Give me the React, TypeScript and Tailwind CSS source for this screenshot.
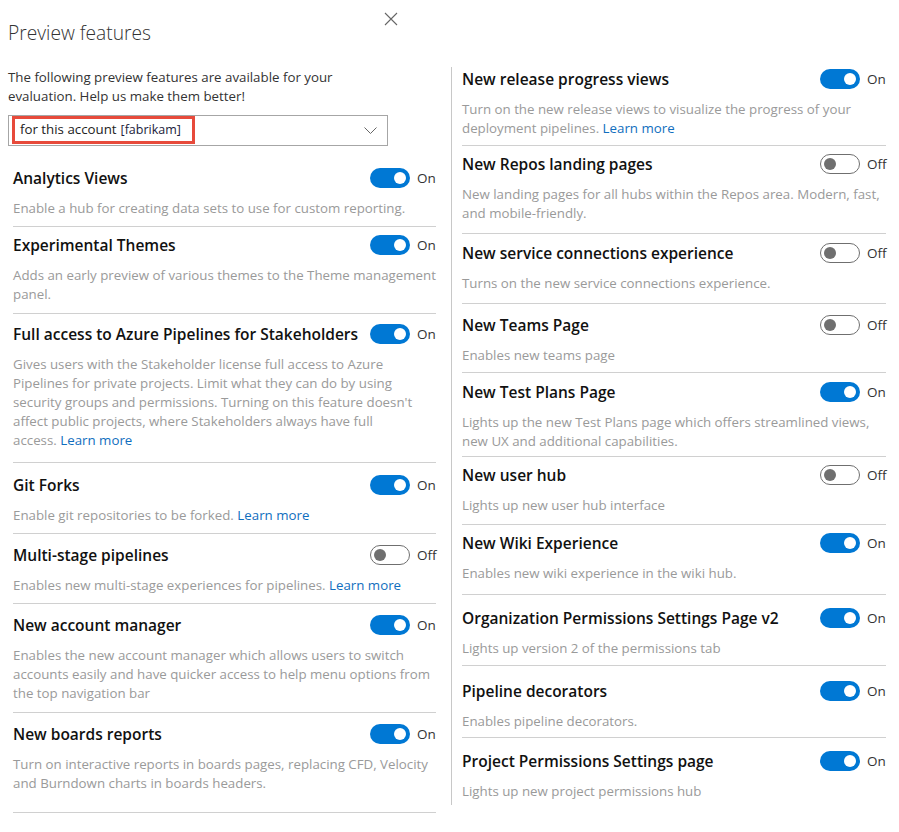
import React from 'react';

type Feature = {
  title: string;
  on: boolean;
  lines: string[];
  link?: boolean;
  pad: string;
  last?: boolean;
};

const leftFeatures: Feature[] = [
  { title: 'Analytics Views', on: true, pad: 'pt-0 pb-[8px]', lines: ['Enable a hub for creating data sets to use for custom reporting.'] },
  { title: 'Experimental Themes', on: true, pad: 'pt-[8px] pb-[9px]', lines: ['Adds an early preview of various themes to the Theme management', 'panel.'] },
  {
    title: 'Full access to Azure Pipelines for Stakeholders',
    on: true,
    pad: 'pt-[10px] pb-[12px]',
    link: true,
    lines: [
      'Gives users with the Stakeholder license full access to Azure',
      'Pipelines for private projects. Limit what they can do by using',
      "security groups and permissions. Turning on this feature doesn't",
      'affect public projects, where Stakeholders always have full',
      'access.',
    ],
  },
  { title: 'Git Forks', on: true, pad: 'pt-[12px] pb-[8px]', link: true, lines: ['Enable git repositories to be forked.'] },
  { title: 'Multi-stage pipelines', on: false, pad: 'pt-[11px] pb-[8px]', link: true, lines: ['Enables new multi-stage experiences for pipelines.'] },
  {
    title: 'New account manager',
    on: true,
    pad: 'pt-[11px] pb-[9px]',
    lines: [
      'Enables the new account manager which allows users to switch',
      'accounts easily and have quicker access to help menu options from',
      'the top navigation bar',
    ],
  },
  {
    title: 'New boards reports',
    on: true,
    pad: 'pt-[11px] pb-[19px]',
    lines: ['Turn on interactive reports in boards pages, replacing CFD, Velocity', 'and Burndown charts in boards headers.'],
  },
];

const rightFeatures: Feature[] = [
  {
    title: 'New release progress views',
    on: true,
    pad: 'pt-[2px] pb-[7px]',
    link: true,
    lines: ['Turn on the new release views to visualize the progress of your', 'deployment pipelines.'],
  },
  {
    title: 'New Repos landing pages',
    on: false,
    pad: 'pt-[8px] pb-[10px]',
    lines: ['New landing pages for all hubs within the Repos area. Modern, fast,', 'and mobile-friendly.'],
  },
  { title: 'New service connections experience', on: false, pad: 'pt-[9px] pb-[10px]', lines: ['Turns on the new service connections experience.'] },
  { title: 'New Teams Page', on: false, pad: 'pt-[11px] pb-[7px]', lines: ['Enables new teams page'] },
  {
    title: 'New Test Plans Page',
    on: true,
    pad: 'pt-[9px] pb-[5px]',
    lines: ['Lights up the new Test Plans page which offers streamlined views,', 'new UX and additional capabilities.'],
  },
  { title: 'New user hub', on: false, pad: 'pt-[8px] pb-[9px]', lines: ['Lights up new user hub interface'] },
  { title: 'New Wiki Experience', on: true, pad: 'pt-[8px] pb-[11px]', lines: ['Enables new wiki experience in the wiki hub.'] },
  { title: 'Organization Permissions Settings Page v2', on: true, pad: 'pt-[13px] pb-[7px]', lines: ['Lights up version 2 of the permissions tab'] },
  { title: 'Pipeline decorators', on: true, pad: 'pt-[15px] pb-[6px]', lines: ['Enables pipeline decorators.'] },
  { title: 'Project Permissions Settings page', on: true, pad: 'pt-[13px] pb-[4px]', last: true, lines: ['Lights up new project permissions hub'] },
];

const Toggle = ({ on }: { on: boolean }) =>
  on ? (
    <span className="flex items-center justify-end w-[40px] h-[20px] rounded-full bg-[#0078d4] pr-[4px]">
      <span className="w-[12px] h-[12px] rounded-full bg-white" />
    </span>
  ) : (
    <span className="flex items-center w-[40px] h-[20px] rounded-full border border-[#6f6f6f] bg-white pl-[3px]">
      <span className="w-[12px] h-[12px] rounded-full bg-[#6f6f6f]" />
    </span>
  );

const FeatureRow = ({ f }: { f: Feature }) => (
  <div className={`${f.pad} ${f.last ? '' : 'border-b border-[#d0d0d0]'}`}>
    <div className="flex items-center justify-between h-[20px]">
      <span className="pt-[2px] text-[15.5px] font-semibold text-[#111] whitespace-nowrap">{f.title}</span>
      <div className="flex items-center">
        <Toggle on={f.on} />
        <span className="ml-[7px] w-[19px] text-[13.5px] text-[#333] whitespace-nowrap">{f.on ? 'On' : 'Off'}</span>
      </div>
    </div>
    <div className="mt-[11px] text-[13.3px] leading-[19px] text-[#9a9a9a]">
      {f.lines.map((line, i) => (
        <div key={i} className="whitespace-nowrap">
          {line}
          {f.link && i === f.lines.length - 1 && (
            <>
              {' '}
              <a className="text-[#106ebe]">Learn more</a>
            </>
          )}
        </div>
      ))}
    </div>
  </div>
);

export default function App() {
  return (
    <div className="w-[899px] h-[832px] bg-white flex items-start font-['Open_Sans',sans-serif] overflow-hidden">
      {/* Left column */}
      <div className="w-[451px] shrink-0">
        <div className="flex items-start">
          <h1 className="mt-[19px] ml-2 text-[19.2px] leading-[28px] font-light text-[#333]">Preview features</h1>
          <button className="ml-auto mr-[53px] mt-[12px]">
            <svg width="14" height="14" viewBox="0 0 14 14" fill="none" stroke="#666" strokeWidth="1.1">
              <path d="M1 1L13 13M13 1L1 13" />
            </svg>
          </button>
        </div>
        <p className="mt-[21px] ml-2 text-[13.3px] leading-[19px] text-[#333]">
          The following preview features are available for your
          <br />
          evaluation. Help us make them better!
        </p>
        <div className="mt-[9px] ml-2 w-[380px] h-[31px] border border-[#a6a6a6] flex items-center justify-between pl-[3px] pr-[10px]">
          <span className="h-[28px] w-[183px] border-[3px] border-[#e74a3b] flex items-center pl-[5px] text-[13.3px] text-[#222] whitespace-nowrap self-start">
            for this account <span className="ml-[4px] text-[12.5px] text-[#1b1b3a]">[fabrikam]</span>
          </span>
          <svg width="13" height="8" viewBox="0 0 13 8" fill="none" stroke="#666" strokeWidth="1">
            <path d="M0.5 0.5L6.5 6.5L12.5 0.5" />
          </svg>
        </div>
        <div className="mt-[22px] ml-[13px] w-[423px]">
          {leftFeatures.map((f) => (
            <FeatureRow key={f.title} f={f} />
          ))}
        </div>
      </div>

      {/* Right column */}
      <div className="mt-[67px] border-l border-[#c8c8c8]">
        <div className="ml-[10px] w-[424px]">
          {rightFeatures.map((f) => (
            <FeatureRow key={f.title} f={f} />
          ))}
        </div>
      </div>
    </div>
  );
}
